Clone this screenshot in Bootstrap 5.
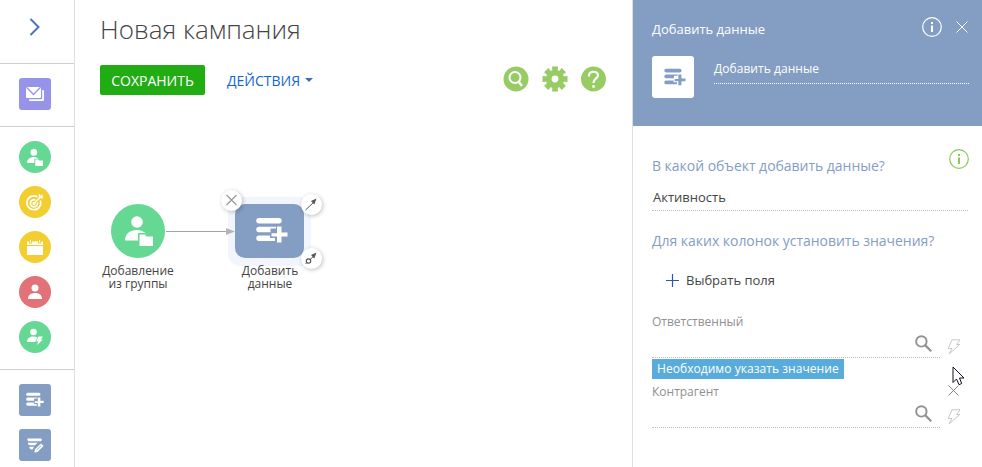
<!DOCTYPE html>
<html lang="ru">
<head>
<meta charset="utf-8">
<meta name="viewport" content="width=device-width, initial-scale=1">
<title>Новая кампания</title>
<link href="https://cdn.jsdelivr.net/npm/bootstrap@5.3.0/dist/css/bootstrap.min.css" rel="stylesheet">
<style>
body{font-family:"Open Sans","Noto Sans",sans-serif;color:#444;font-size:13px;line-height:18px;background:#fff}
svg{display:block;flex:none}
.app{height:467px;width:982px}
.rail{width:75px;border-right:1px solid #dedede}
.rail-sec{border-bottom:1px solid #cfcfcf;padding-right:4px}
.sec-toggle{height:64px}
.sec-mail{height:63px;padding-top:14px}
.sec-people{height:243px;padding-top:14px;gap:13px}
.sec-data{padding:14px 4px 0 0;gap:13px}
.tile{width:32px;height:32px;border-radius:3px;color:#fff;background:#849dc3}
.tile.round{border-radius:50%}
.violet{background:#9594e8}.green{background:#65d893}.yellow{background:#f2ce31}.red{background:#e27278}
.work{width:557px}
.title{font-weight:300;font-size:26px;line-height:36px;margin:11px 0 18px;white-space:nowrap}
.tools{height:30px}
.save{width:105px;height:30px;background:#22ac14;border:0;border-radius:2px;color:#fff;font-size:14px;padding:1px 0 0;line-height:28px}
.save:hover{background:#22ac14;color:#fff}
.acts{color:#0e63d6;font-size:14px;padding:2px 0 0;margin-left:22px;border:0;line-height:28px}
.acts::after{margin-left:5px;border-top-width:4px;border-left-width:4px;border-right-width:4px;vertical-align:4px;color:#3d6cc0}
.canvas-node{position:absolute}
.cap{font-size:12px;line-height:13px;text-align:center;white-space:nowrap;color:#444}
.halo{width:83px;height:69px;border-radius:12px;background:#f2f5fd}
.box{width:69px;height:54px;border-radius:10px;background:#849dc3;color:#fff}
.knob{width:21px;height:21px;border-radius:50%;background:#fff;box-shadow:1px 1px 4px rgba(0,0,0,.25)}
.side{width:350px;border-left:1px solid #dedede}
.side-head{height:126px;background:#849dc3;color:#fff;padding:17px 13px 0 19px}
.thumb{width:42px;height:42px;border-radius:3px;background:#fff;color:#849dc3}
.dots{border-bottom:1px dotted #bdbdbd}
.side-head .dots{border-color:#fff;font-size:12px;letter-spacing:.05px}
.side-body{padding:23px 13px 0 19px}
.q{color:#849dc3;font-size:14px;line-height:20px;white-space:nowrap;letter-spacing:-.03px}
.lbl{color:#8f8f8f;font-size:12px;line-height:16px}
.warn{background:#58acdc;color:#fff;font-size:12px;line-height:20px;height:20px;width:192px;padding-left:5px;margin-top:1px;white-space:nowrap;letter-spacing:.05px}
.lookup{width:288px;height:28px;padding:5px 8px 0 0;color:#929292}
.flash-btn{margin:9px 0 0 7px;color:#c8c8c8}
.pointer{position:absolute;left:952px;top:366px}
</style>
<script src="https://cdn.jsdelivr.net/npm/bootstrap@5.3.0/dist/js/bootstrap.bundle.min.js"></script>
</head>
<body>
<svg width="0" height="0" class="position-absolute" aria-hidden="true">
<defs>
<symbol id="rows-plus" viewBox="0 0 32 28">
<path fill="currentColor" d="M3 1H23a2.500 2.500 0 0 1 0 5.500H3A2.500 2.500 0 0 1 3 1zM3 9.700H20V11.500H14.500V15.200H3A2.500 2.500 0 0 1 3 9.700zM3 18.500H14V21H19V24H3A2.500 2.500 0 0 1 3 18.500zM21 9.500H25.500V15.500H31.500V19.500H25.500V25.500H21V19.500H15.500V16.200H21z"/>
</symbol>
<symbol id="person" viewBox="0 0 16 16"><circle cx="8" cy="4" r="3.500" fill="currentColor"/><path fill="currentColor" d="M1 15C1 11 4 9 8 9S15 11 15 15z"/></symbol>
<symbol id="person-folder" viewBox="0 0 28 30">
<circle cx="12" cy="6" r="5.800" fill="currentColor"/><path fill="currentColor" d="M0 24.500C0 18 5 14 12 14C16 14 19.500 15.500 21.500 18.500L20.500 17H13V24.500z"/><path fill="currentColor" d="M14.500 18.500H20L21.500 20.500H28V30H14.500z"/>
</symbol>
<symbol id="info" viewBox="0 0 20 20"><circle cx="10" cy="10" r="9.300" fill="none" stroke="currentColor" stroke-width="1.200"/><path fill="currentColor" d="M9 5h2v2H9zM9 8.500h2V15H9z"/></symbol>
<symbol id="lens" viewBox="0 0 16 16"><circle cx="6" cy="6" r="4.900" fill="none" stroke="currentColor" stroke-width="1.800"/><path d="M9.500 9.500L15.300 15.300" stroke="currentColor" stroke-width="2.100"/></symbol>
<symbol id="flash" viewBox="0 0 14 16"><path fill="none" stroke="currentColor" d="M5 .8H13L9.500 5.500H12.800L2 15L5 9.500H1.200z"/></symbol>
</defs>
</svg>
<div class="app d-flex overflow-hidden position-relative">
<nav class="rail flex-shrink-0">
<div class="rail-sec sec-toggle d-flex align-items-center justify-content-center">
<svg width="12" height="18" viewBox="0 0 12 18" style="margin:-9px 0 0 -1px"><path d="M1.500 1L9.500 9L1.500 17" fill="none" stroke="#4c74c0" stroke-width="2"/></svg>
</div>
<div class="rail-sec sec-mail d-flex justify-content-center">
<div class="tile violet d-flex align-items-center justify-content-center"><svg width="18" height="14" viewBox="0 0 18 14"><rect width="15" height="11" rx="1" fill="#fff"/><path d="M.5 .2L7.500 7.500L14.500 .2" stroke="#9594e8" stroke-width="1.300" fill="none"/><path d="M16.200 3H17a1 1 0 0 1 1 1V13a1 1 0 0 1-1 1H4a1 1 0 0 1-1-1V12.200H15.200a1 1 0 0 0 1-1z" fill="#fff"/></svg></div>
</div>
<div class="rail-sec sec-people d-flex flex-column align-items-center">
<div class="tile round green d-flex align-items-center justify-content-center"><svg width="16" height="17"><use href="#person-folder"/></svg></div>
<div class="tile round yellow d-flex align-items-center justify-content-center"><svg width="18" height="18" viewBox="0 0 18 18" fill="none" stroke="#fff" stroke-width="1.700"><path d="M11.500 4A6.900 6.900 0 1 0 14.300 7.500"/><path d="M9.500 7A3.600 3.600 0 1 0 11.500 9.500"/><path d="M8 10.500L16.500 2M13.500 1v3.500H17" stroke-width="1.400"/><circle cx="8" cy="10.300" r=".8"/></svg></div>
<div class="tile round yellow d-flex align-items-center justify-content-center"><svg width="16" height="15" viewBox="0 0 16 15" fill="#fff"><path d="M0 1.500H2V3.500H5V1.500H11V3.500H14V1.500H16V5H0zM0 6H16V15H0zM3 0H4V2.500H3zM12 0H13V2.500H12z"/></svg></div>
<div class="tile round red d-flex align-items-center justify-content-center"><svg width="16" height="16"><use href="#person"/></svg></div>
<div class="tile round green d-flex align-items-center justify-content-center"><svg width="16" height="18" viewBox="0 0 16 18" fill="#fff"><circle cx="6.500" cy="4" r="3.300"/><path d="M0 14C0 10.500 3 8.500 6.500 8.500Q9 8.500 10.500 9.500L8 14zM11.500 8.500H16L13.800 11.500H16L9.500 17.500L11.500 13.500H9.200z"/></svg></div>
</div>
<div class="sec-data d-flex flex-column align-items-center">
<div class="tile d-flex align-items-center justify-content-center"><svg width="18" height="16"><use href="#rows-plus"/></svg></div>
<div class="tile d-flex align-items-center justify-content-center"><svg width="18" height="15" viewBox="0 0 18 15" fill="#fff"><path d="M1.500 .5H14.500a1.200 1.200 0 0 1 0 2.700H2.500A2 2 0 0 1 1.500 .5zM1.800 4.700H11.500L9 7.300H4A2.500 2.500 0 0 1 1.800 4.700zM3.500 8.700H8L6.500 11.500H5.500A2.200 2.200 0 0 1 3.500 8.700zM9 11.200L15 5.500L17.500 8L11.500 14L8.300 14.500z"/><path d="M10.500 12L15 7.700" stroke="#849dc3" stroke-width=".8"/></svg></div>
</div>
</nav>

<main class="work flex-shrink-0 position-relative">
<div style="padding:0 26px 0 25px">
<h1 class="title">Новая кампания</h1>
<div class="tools d-flex align-items-center">
<button class="btn save">СОХРАНИТЬ</button>
<button class="btn acts dropdown-toggle">ДЕЙСТВИЯ</button>
<div class="d-flex ms-auto" style="gap:13px;color:#97cc64;margin-top:-3px">
<svg width="26" height="26" viewBox="0 0 26 26"><circle cx="13" cy="13" r="12.500" fill="currentColor"/><circle cx="12" cy="11.500" r="5.500" fill="none" stroke="#fff" stroke-width="2"/><path d="M15.500 15.500L19 20" stroke="#fff" stroke-width="2.500"/></svg>
<svg width="26" height="26" viewBox="0 0 26 26" fill="currentColor"><path id="tooth" d="M10 .5H16L15.500 6H10.500z"/><use href="#tooth" transform="rotate(45 13 13)"/><use href="#tooth" transform="rotate(90 13 13)"/><use href="#tooth" transform="rotate(135 13 13)"/><use href="#tooth" transform="rotate(180 13 13)"/><use href="#tooth" transform="rotate(225 13 13)"/><use href="#tooth" transform="rotate(270 13 13)"/><use href="#tooth" transform="rotate(315 13 13)"/><circle cx="13" cy="13" r="6.300" fill="none" stroke="currentColor" stroke-width="5.800"/></svg>
<svg width="25" height="26" viewBox="0 0 25 26"><circle cx="12.500" cy="13" r="12.500" fill="currentColor"/><path d="M8 10.500V9.500C8 4.500 17 4.500 17 9.500C17 12.500 12.500 12.500 12.500 17" fill="none" stroke="#fff" stroke-width="2.200"/><path d="M11.300 19.200h2.500v2.500h-2.500z" fill="#fff"/></svg>
</div>
</div>
</div>
<!-- campaign diagram -->
<div class="canvas-node halo" style="left:153px;top:197px"></div>
<svg class="canvas-node" style="left:91px;top:225px" width="70" height="12"><path d="M0 6.500H62" stroke="#a5a5a5"/><path d="M60 3L69 6.500L60 10z" fill="#b5b5b5"/></svg>
<div class="canvas-node rounded-circle green d-flex align-items-center justify-content-center text-white" style="left:36px;top:204px;width:54px;height:54px"><svg width="28" height="30" style="margin:-1px 0 0 1px"><use href="#person-folder"/></svg></div>
<div class="canvas-node cap" style="left:13px;top:264px;width:100px">Добавление<br>из группы</div>
<div class="canvas-node box d-flex align-items-center justify-content-center" style="left:160px;top:204px"><svg width="32" height="28" style="margin-left:4px"><use href="#rows-plus"/></svg></div>
<div class="canvas-node cap" style="left:145px;top:264px;width:100px">Добавить<br>данные</div>
<div class="canvas-node knob" style="left:146px;top:190px"><svg width="21" height="21"><path d="M5.500 5L15.500 15M15.500 5L5.500 15" stroke="#999" stroke-width="1.200"/></svg></div>
<div class="canvas-node knob" style="left:226px;top:194px"><svg width="21" height="21"><path d="M4.500 16L13 8" stroke="#555"/><path d="M15.500 4.500L10 7L13.300 10.500z" fill="#555"/></svg></div>
<div class="canvas-node knob" style="left:226px;top:248px"><svg width="21" height="21"><circle cx="7.500" cy="13" r="2.200" fill="none" stroke="#555" stroke-width="1.200"/><path d="M4.500 16L6 14.500M9 11.500L13 8" stroke="#555"/><path d="M15.500 4.500L10 7L13.300 10.500z" fill="#555"/></svg></div>
</main>

<aside class="side flex-shrink-0">
<header class="side-head">
<div class="d-flex" style="height:39px">
<div style="padding-top:3px">Добавить данные</div>
<svg class="ms-auto" width="20" height="20"><use href="#info"/></svg>
<svg width="12" height="12" viewBox="0 0 12 12" style="margin:4px 1px 0 14px"><path d="M.5 .5L11.500 11.500M11.500 .5L.5 11.500" stroke="#fff"/></svg>
</div>
<div class="d-flex">
<div class="thumb d-flex align-items-center justify-content-center"><svg width="22" height="19" style="margin-left:3px"><use href="#rows-plus"/></svg></div>
<div class="dots flex-grow-1" style="margin-left:20px;height:28px;padding-top:4px">Добавить данные</div>
</div>
</header>
<div class="side-body">
<div class="d-flex" style="height:39px">
<div class="q" style="padding-top:7px">В какой объект добавить данные?</div>
<svg class="ms-auto" width="20" height="20" style="color:#8cc955"><use href="#info"/></svg>
</div>
<div class="dots" style="height:23px;padding-left:1px;margin-right:1px">Активность</div>
<div class="q" style="margin-top:20px">Для каких колонок установить значения?</div>
<div class="d-flex align-items-center" style="margin:20px 0 25px 14px;height:18px"><svg width="13" height="13" viewBox="0 0 13 13"><path d="M6.500 0V13M0 6.500H13" stroke="#2a55b0" stroke-width="1.200"/></svg><span style="margin-left:7px">Выбрать поля</span></div>
<div class="lbl">Ответственный</div>
<div class="d-flex">
<div class="dots lookup"><svg class="ms-auto" width="17" height="17"><use href="#lens"/></svg></div>
<svg class="flash-btn" width="14" height="16"><use href="#flash"/></svg>
</div>
<div class="warn">Необходимо указать значение</div>
<div class="d-flex" style="height:21px;padding-top:5px"><div class="lbl">Контрагент</div><svg class="ms-auto" width="11" height="11" style="margin:1px 10px 0 0"><path d="M.5 .5L10.500 10.500M10.500 .5L.5 10.500" stroke="#888"/></svg></div>
<div class="d-flex">
<div class="dots lookup"><svg class="ms-auto" width="17" height="17"><use href="#lens"/></svg></div>
<svg class="flash-btn" width="14" height="16"><use href="#flash"/></svg>
</div>
</div>
</aside>
<svg class="pointer" width="13" height="20" viewBox="0 0 13 20"><path d="M1 1V16.500L4.500 13L7 18.700L9.700 17.500L7.500 12H12z" fill="#fff" stroke="#101020"/></svg>
</div>
</body>
</html>
